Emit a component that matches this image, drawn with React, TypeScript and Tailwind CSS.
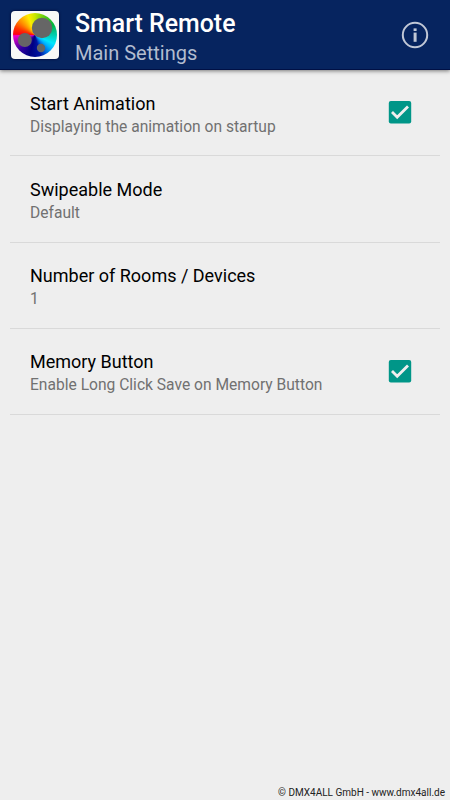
import React from "react";

type Setting = {
  title: string;
  summary: string;
  checked?: boolean;
};

// the settings shown in the list
const settings: Setting[] = [
  {
    title: "Start Animation",
    summary: "Displaying the animation on startup",
    checked: true,
  },
  { title: "Swipeable Mode", summary: "Default" },
  { title: "Number of Rooms / Devices", summary: "1" },
  {
    title: "Memory Button",
    summary: "Enable Long Click Save on Memory Button",
    checked: true,
  },
];

// color wheel logo
const Logo: React.FC = () => (
  <div className="flex h-12 w-12 shrink-0 items-center justify-center rounded-[4px] bg-[#f7f7f7] shadow-[0_0_2px_1px_rgba(0,0,50,0.5)]">
    <div className="h-11 w-11 rounded-full bg-[conic-gradient(from_0deg_at_50%_50%,#c8e600_0deg,#50c814_30deg,#00b43c_60deg,#00c8a0_85deg,#00e6ff_115deg,#00b4ff_130deg,#0064dc_148deg,#0014a0_165deg,#000082_195deg,#3200a0_225deg,#8c00b4_245deg,#f000c8_268deg,#ff0014_272deg,#ff3200_290deg,#ff8c00_312deg,#ffeb00_340deg,#c8e600_360deg)]">
      <svg viewBox="0 0 44 44" className="h-11 w-11" fill="#666666">
        <circle cx="29" cy="15" r="10.2" />
        <circle cx="11.8" cy="27" r="7" />
        <circle cx="28" cy="35" r="4.2" />
      </svg>
    </div>
  </div>
);

// info icon of the action bar
const InfoIcon: React.FC = () => (
  <svg viewBox="0 0 28 28" className="h-7 w-7" fill="none">
    <circle cx="14" cy="14" r="12.2" stroke="#c1c8d6" strokeWidth="2" />
    <rect x="12.6" y="7.4" width="3" height="2.6" fill="#c1c8d6" />
    <path d="M12.6 11.6h3v9.2h-3z" fill="#c1c8d6" />
  </svg>
);

const CheckBox: React.FC = () => (
  <svg viewBox="0 0 24 24" className="mb-px h-6 w-6" fill="none">
    <rect x="0.8" y="1" width="22.4" height="22.6" rx="2" fill="#009688" />
    <path d="M4 12.1l5.2 5.2L20 6.4" stroke="#eeeeee" strokeWidth="2.8" />
  </svg>
);

const App: React.FC = () => {
  return (
    <div className="flex h-[800px] w-[450px] flex-col bg-[#eeeeee] font-['Roboto',sans-serif]">
      <header className="flex h-[70px] shrink-0 items-center border-b border-[#001045] bg-[#06245f] pr-[21px] pl-[11px] shadow-[0_1px_4px_rgba(0,0,0,0.5)]">
        <Logo />
        <div className="ml-4 flex-1 pt-[6px]">
          <h1 className="text-[24.9px] leading-[30px] font-medium text-white">
            Smart Remote
          </h1>
          <h2 className="text-[20px] leading-[28px] text-[#b2bccf]">
            Main Settings
          </h2>
        </div>
        <InfoIcon />
      </header>

      <ul className="mx-2.5 flex-1">
        {settings.map((setting) => (
          <li
            key={setting.title}
            className="flex h-[86.25px] items-center justify-between border-b border-[#d9d9d9] pr-7 pl-5"
          >
            <div className="pt-[3.8px]">
              <p className="text-[18px] leading-6 text-black">
                {setting.title}
              </p>
              <p className="text-[15.6px] leading-[22px] text-[#717171]">
                {setting.summary}
              </p>
            </div>
            {setting.checked && <CheckBox />}
          </li>
        ))}
      </ul>

      <footer className="pr-[5px] text-right text-[10px] leading-[14px] text-[#222222]">
        © DMX4ALL GmbH - www.dmx4all.de
      </footer>
    </div>
  );
};

export default App;
